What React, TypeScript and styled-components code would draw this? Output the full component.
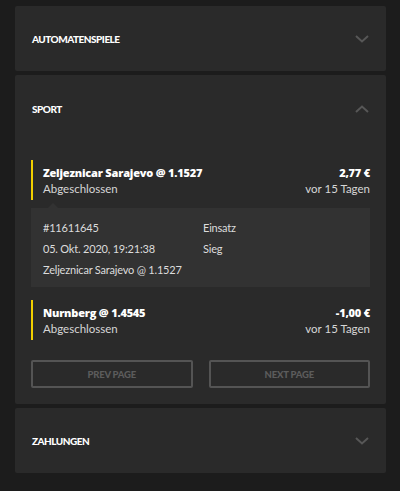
import React, { useState } from 'react';
import styled, { createGlobalStyle } from 'styled-components';

const GlobalStyle = createGlobalStyle`
  html, body {
    margin: 0;
    padding: 0;
    background: #1c1c1c;
  }
  * { box-sizing: border-box; }
`;

interface Bet {
  id: string;
  title: string;
  status: string;
  amount: string;
  when: string;
  details?: { ticket: string; date: string; pick: string };
}

const bets: Bet[] = [
  {
    id: 'a',
    title: 'Zeljeznicar Sarajevo @ 1.1527',
    status: 'Abgeschlossen',
    amount: '2,77 €',
    when: 'vor 15 Tagen',
    details: { ticket: '#11611645', date: '05. Okt. 2020, 19:21:38', pick: 'Zeljeznicar Sarajevo @ 1.1527' },
  },
  {
    id: 'b',
    title: 'Nurnberg @ 1.4545',
    status: 'Abgeschlossen',
    amount: '-1,00 €',
    when: 'vor 15 Tagen',
  },
];

const Chevron: React.FC<{ up?: boolean }> = ({ up }) => (
  <ChevronSvg width="14" height="8" viewBox="0 0 14 8">
    <path
      d={up ? 'M1 7 L7 1.5 L13 7' : 'M1 1 L7 6.5 L13 1'}
      fill="none"
      stroke="#575757"
      strokeWidth="2"
    />
  </ChevronSvg>
);

const Section: React.FC<{ title: string; open?: boolean; children?: React.ReactNode }> = ({ title, open, children }) => (
  <Card>
    <CardHeader $open={!!open}>
      <CardTitle>{title}</CardTitle>
      <Chevron up={open} />
    </CardHeader>
    {open && <CardBody>{children}</CardBody>}
  </Card>
);

export default function App() {
  const [openBet] = useState<string>('a');

  return (
    <Page>
      <GlobalStyle />
      <Section title="Automatenspiele" />
      <Section title="Sport" open>
        {bets.map(bet => (
          <React.Fragment key={bet.id}>
            <BetRow>
              <BetMain>
                <BetTitle>{bet.title}</BetTitle>
                <BetSub>{bet.status}</BetSub>
              </BetMain>
              <BetSide>
                <BetTitle>{bet.amount}</BetTitle>
                <BetSub>{bet.when}</BetSub>
              </BetSide>
            </BetRow>
            {openBet === bet.id && bet.details && (
              <Details>
                <DetailText>{bet.details.ticket}</DetailText>
                <DetailText>Einsatz</DetailText>
                <DetailText>{bet.details.date}</DetailText>
                <DetailText>Sieg</DetailText>
                <DetailText>{bet.details.pick}</DetailText>
              </Details>
            )}
          </React.Fragment>
        ))}
        <Pager>
          <PageButton disabled>Prev page</PageButton>
          <PageButton disabled>Next page</PageButton>
        </Pager>
      </Section>
      <Section title="Zahlungen" />
    </Page>
  );
}

const Page = styled.div`
  width: 400px;
  min-height: 491px;
  padding: 6px 14px 18px 15px;
  display: flex;
  flex-direction: column;
  gap: 4px;
  font-family: 'Lato', 'Open Sans', sans-serif;
`;

const Card = styled.section`
  background: #2a2a2a;
  border-radius: 2px;
`;

const CardHeader = styled.div<{ $open: boolean }>`
  height: ${p => (p.$open ? 66 : 65)}px;
  padding: ${p => (p.$open ? '1px' : '0')} 17px 0;
  display: flex;
  align-items: center;
  justify-content: space-between;
`;

const CardTitle = styled.h3`
  margin: 0;
  color: #ffffff;
  font-family: 'Lato', sans-serif;
  font-size: 10px;
  font-weight: 900;
  text-transform: uppercase;
  letter-spacing: -0.5px;
`;

const ChevronSvg = styled.svg`
  display: block;
`;

const CardBody = styled.div`
  padding: 19px 16px 16px;
  display: flex;
  flex-direction: column;
`;

const BetRow = styled.div`
  height: 40px;
  border-left: 2px solid #f2cf00;
  padding: 5px 0 0 10px;
  display: flex;
  justify-content: space-between;
  & + & {
    margin-top: 13px;
  }
`;

const BetMain = styled.div`
  display: flex;
  flex-direction: column;
`;

const BetSide = styled(BetMain)`
  align-items: flex-end;
`;

const BetTitle = styled.div`
  color: #ffffff;
  font-family: 'Open Sans', sans-serif;
  font-size: 11px;
  font-weight: 800;
  line-height: 16px;
  letter-spacing: -0.2px;
`;

const BetSub = styled.div`
  color: #d6d6d6;
  font-size: 11.5px;
  line-height: 16px;
`;

const Details = styled.div`
  position: relative;
  margin: 8px 0 13px;
  background: #323232;
  padding: 9px 12px 7px;
  display: grid;
  grid-template-columns: 160px 1fr;
  &::before {
    content: '';
    position: absolute;
    top: -5px;
    left: 17px;
    border-left: 5px solid transparent;
    border-right: 5px solid transparent;
    border-bottom: 5px solid #323232;
  }
`;

const DetailText = styled.div`
  color: #dcdcdc;
  font-size: 11px;
  line-height: 21px;
  letter-spacing: -0.2px;
  white-space: nowrap;
`;

const Pager = styled.div`
  margin-top: 20px;
  display: grid;
  grid-template-columns: 1fr 1fr;
  gap: 16px;
`;

const PageButton = styled.button`
  height: 28px;
  background: transparent;
  border: 2px solid #545454;
  border-radius: 2px;
  color: #5c5c5c;
  font-family: 'Lato', sans-serif;
  font-size: 9.5px;
  font-weight: 900;
  letter-spacing: -0.2px;
  text-transform: uppercase;
  cursor: default;
`;
